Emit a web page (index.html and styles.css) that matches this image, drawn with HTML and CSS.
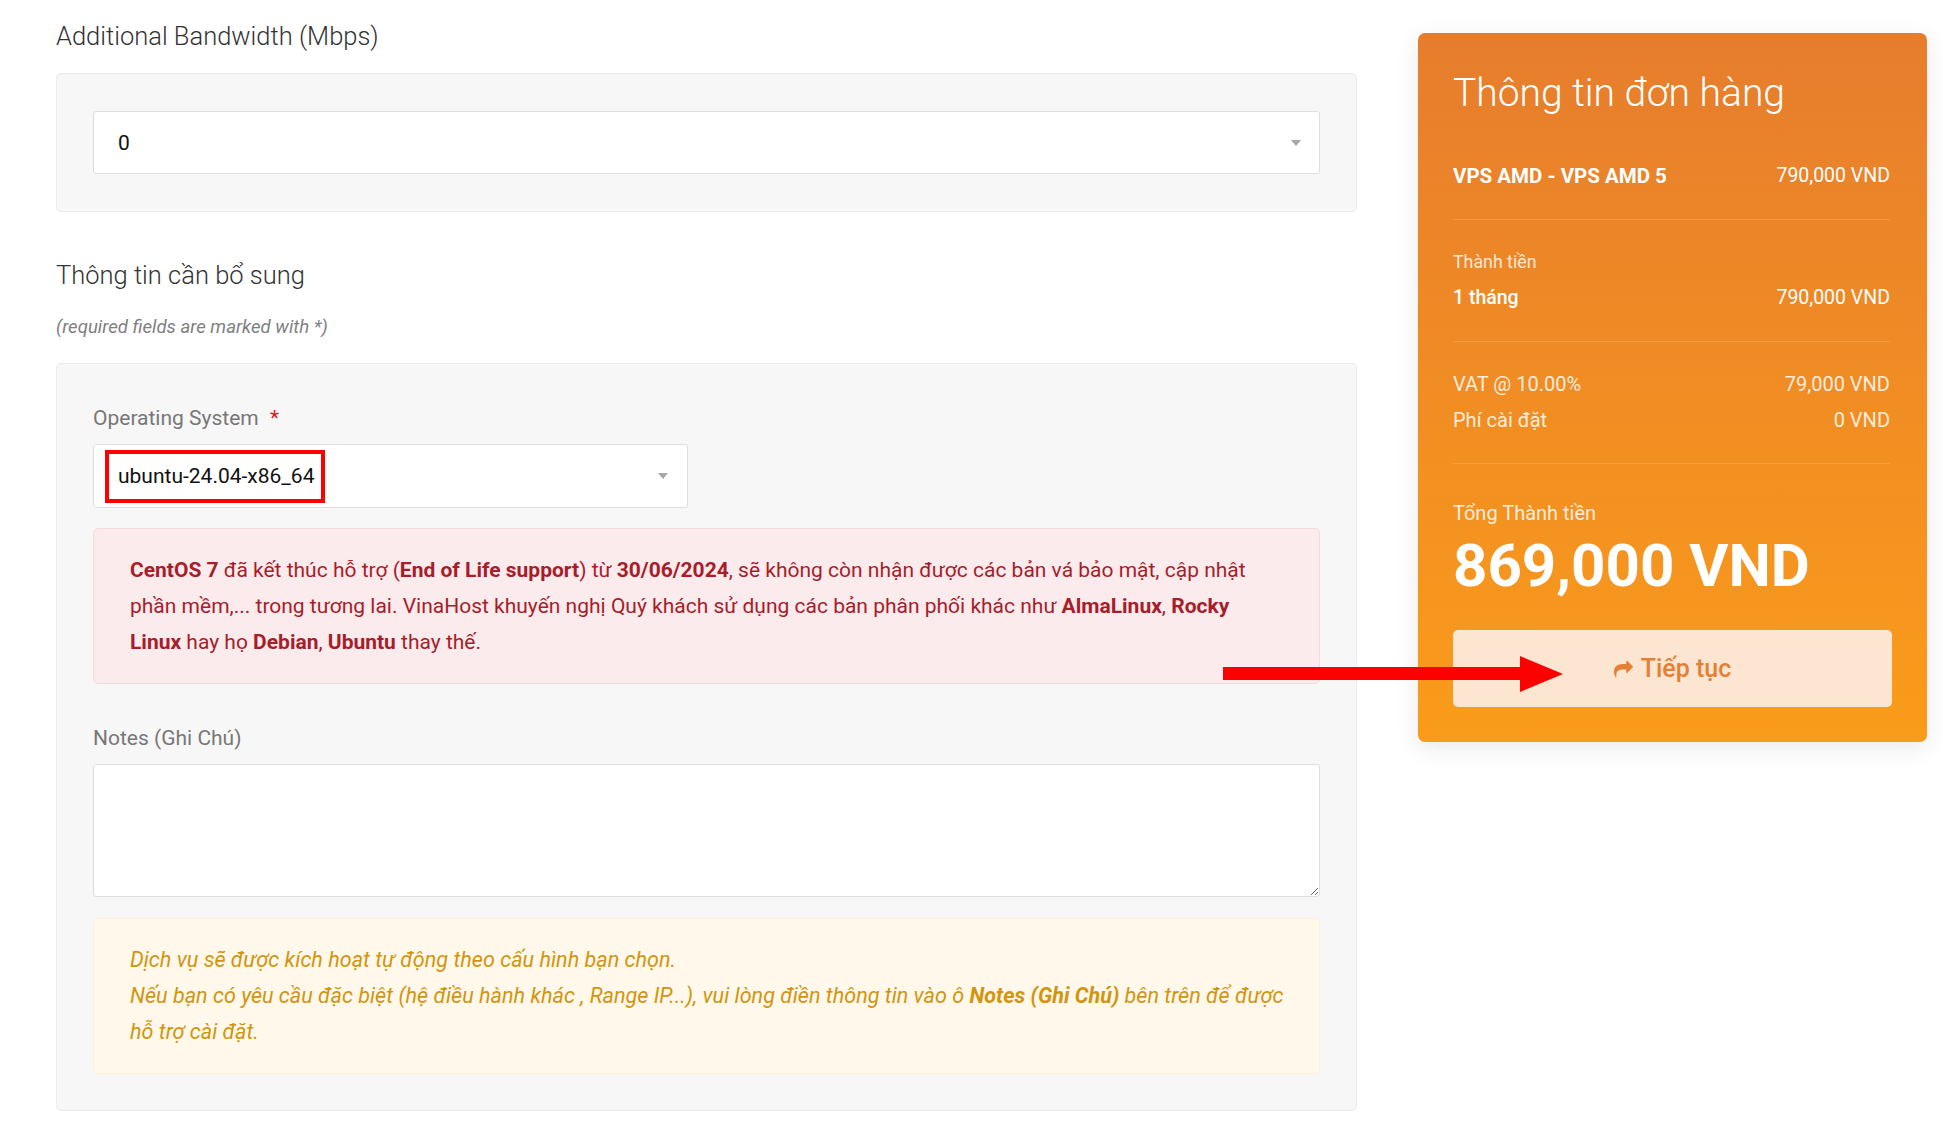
FILE: index.html
```html
<!DOCTYPE html>
<html lang="vi">
<head>
<meta charset="utf-8">
<title>Order</title>
<link rel="stylesheet" href="styles.css">
</head>
<body>
<div class="page">
  <div class="main">
    <h3 class="sec-title">Additional Bandwidth (Mbps)</h3>
    <div class="card card-sm">
      <div class="select full">
        <span class="sel-val">0</span>
        <span class="caret"></span>
      </div>
    </div>

    <h3 class="sec-title sec-title-2">Thông tin cần bổ sung</h3>
    <p class="req-note">(required fields are marked with *)</p>

    <div class="card">
      <label class="field-label">Operating System <span class="star">*</span></label>
      <div class="select half">
        <span class="sel-val"><span class="mark">ubuntu-24.04-x86_64</span></span>
        <span class="caret"></span>
      </div>

      <div class="alert alert-danger">
        <b>CentOS 7</b> đã kết thúc hỗ trợ (<b>End of Life support</b>) từ <b>30/06/2024</b>, sẽ không còn nhận được các bản vá bảo mật, cập nhật<br>phần mềm,... trong tương lai. VinaHost khuyến nghị Quý khách sử dụng các bản phân phối khác như <b>AlmaLinux</b>, <b>Rocky</b><br><b>Linux</b> hay họ <b>Debian</b>, <b>Ubuntu</b> thay thế.
      </div>

      <label class="field-label notes-label">Notes (Ghi Chú)</label>
      <textarea class="notes"></textarea>

      <div class="alert alert-warning">
        Dịch vụ sẽ được kích hoạt tự động theo cấu hình bạn chọn.<br>Nếu bạn có yêu cầu đặc biệt (hệ điều hành khác , Range IP...), vui lòng điền thông tin vào ô <b>Notes (Ghi Chú)</b> bên trên để được<br>hỗ trợ cài đặt.
      </div>
    </div>
  </div>

  <aside class="summary">
    <h2 class="sum-title">Thông tin đơn hàng</h2>
    <div class="sum-sec sum-first">
      <div class="row strong"><span>VPS AMD - VPS AMD 5</span><span class="val">790,000 VND</span></div>
    </div>
    <div class="sum-sec">
      <div class="row sub"><span>Thành tiền</span></div>
      <div class="row medium"><span>1 tháng</span><span class="val">790,000 VND</span></div>
    </div>
    <div class="sum-sec">
      <div class="row muted"><span>VAT @ 10.00%</span><span>79,000 VND</span></div>
      <div class="row muted"><span>Phí cài đặt</span><span>0 VND</span></div>
    </div>
    <div class="sum-total">
      <div class="row muted"><span>Tổng Thành tiền</span></div>
      <div class="total">869,000 VND</div>
      <button class="btn-next" type="button">
        <svg class="ico" viewBox="0 0 1792 1792" width="19" height="19" aria-hidden="true"><path fill="currentColor" d="M1792 640q0 26-19 45l-512 512q-19 19-45 19t-45-19-19-45v-256h-224q-98 0-175.5 6t-154 21.5-133 42.5-105.5 69.5-80 101-48.5 138.5-17.5 181q0 55 5 123 0 6 2.5 23.5t2.5 26.5q0 15-8.5 25t-23.5 10q-16 0-28-17-7-9-13-22t-13.5-30-10.5-24q-127-285-127-451 0-199 53-333 162-403 875-403h224v-256q0-26 19-45t45-19 45 19l512 512q19 19 19 45z"/></svg>
        <span>Tiếp tục</span>
      </button>
    </div>
  </aside>
</div>

<svg class="annot-arrow" width="360" height="50" viewBox="0 0 360 50" aria-hidden="true">
  <rect x="0" y="18" width="300" height="13" fill="#ff0000"/>
  <polygon points="297,7 340,25 297,43" fill="#ff0000"/>
</svg>
</body>
</html>
```

FILE: styles.css
```css
* { box-sizing: border-box; }

html, body {
  margin: 0;
  padding: 0;
  background: #ffffff;
}

body {
  font-family: Roboto, "Noto Sans", "Liberation Sans", sans-serif;
  font-size: 21px;
  color: #333333;
  position: relative;
  min-height: 1147px;
}

.page {
  display: flex;
  align-items: flex-start;
  gap: 61px;
  padding: 21px 16px 0 56px;
}

.main {
  width: 1301px;
  flex: none;
}

.sec-title {
  margin: 0 0 22px;
  font-size: 25.5px;
  font-weight: 300;
  line-height: 30px;
  color: #333;
}

.sec-title-2 {
  margin: 48px 0 0;
}

.req-note {
  margin: 25px 0 23px;
  font-size: 18.6px;
  line-height: 25px;
  font-style: italic;
  color: #808080;
}

.card {
  background: #f7f7f7;
  border: 1px solid #ebebeb;
  border-radius: 5px;
  padding: 37px 36px 36px;
}

.card.card-sm {
  padding-bottom: 37px;
}

.select {
  height: 63px;
  background: #fff;
  border: 1px solid #dedede;
  border-radius: 3px;
  display: flex;
  align-items: center;
  justify-content: space-between;
  padding: 0 18px 0 24px;
  color: #111;
  font-size: 21px;
}

.select.half {
  width: 595px;
  height: 64px;
  padding-right: 19px;
}

.caret {
  width: 0;
  height: 0;
  border-left: 5px solid transparent;
  border-right: 5px solid transparent;
  border-top: 6px solid #a8a8a8;
}

.mark {
  display: inline-block;
  border: 4px solid #ff0000;
  padding: 0 7px 0 9px;
  margin-left: -13px;
  line-height: 45px;
}

.field-label {
  display: block;
  margin: 3px 0 12px;
  line-height: 28px;
  font-size: 21px;
  color: #777777;
}

.star {
  color: #e0161e;
  margin-left: 6px;
}

.notes-label {
  margin-top: 40px;
}

.alert {
  border: 1px solid transparent;
  border-radius: 5px;
  padding: 23px 36px;
  line-height: 36px;
  font-size: 21px;
  white-space: nowrap;
}

.alert b { font-weight: 700; }

.alert-danger {
  margin-top: 20px;
  background: #fbebed;
  border-color: #f7dadd;
  color: #a71d2a;
}

.alert-warning {
  margin-top: 21px;
  background: #fff8eb;
  border-color: #fcf0d6;
  color: #d2950e;
  font-style: italic;
  font-size: 21.6px;
}

.notes {
  display: block;
  width: 100%;
  height: 133px;
  background: #fff;
  border: 1px solid #dedede;
  border-radius: 3px;
  resize: vertical;
  font-family: inherit;
  font-size: 21px;
  margin: 0;
}

.summary {
  width: 509px;
  flex: none;
  margin-top: 12px;
  background: linear-gradient(180deg, #e67d2d 0%, #fa9c1a 100%);
  border-radius: 7px;
  box-shadow: 0 6px 24px rgba(0, 0, 0, 0.09);
  padding: 36px 37px 35px 35px;
  color: #fff;
}

.sum-title {
  margin: 2px 0 0;
  font-size: 39px;
  font-weight: 300;
  line-height: 45px;
}

.sum-sec {
  padding: 24px 0 25px;
  border-bottom: 1px solid rgba(255, 255, 255, 0.14);
}

.sum-first {
  padding-top: 42px;
}

.row {
  display: flex;
  justify-content: space-between;
  line-height: 36px;
  font-size: 19.5px;
}

.row.strong span:first-child { font-weight: 700; font-size: 20.5px; }
.row.medium span:first-child { font-weight: 500; }
.row.sub { font-size: 17.8px; color: rgba(255, 255, 255, 0.82); }
.row.muted { color: rgba(255, 255, 255, 0.85); font-size: 20px; }

.sum-total {
  padding-top: 31px;
}

.total {
  font-size: 60px;
  font-weight: 700;
  line-height: 66px;
  margin-top: 2px;
}

.btn-next {
  margin-top: 31px;
  width: calc(100% + 2px);
  height: 77px;
  border: 0;
  border-radius: 5px;
  background: #fde6d1;
  color: #e57f36;
  font-family: inherit;
  font-size: 25px;
  font-weight: 500;
  display: flex;
  align-items: center;
  justify-content: center;
  gap: 8px;
  cursor: pointer;
}

.btn-next .ico {
  margin-top: 2px;
}

.annot-arrow {
  position: absolute;
  left: 1223px;
  top: 649px;
}
```
